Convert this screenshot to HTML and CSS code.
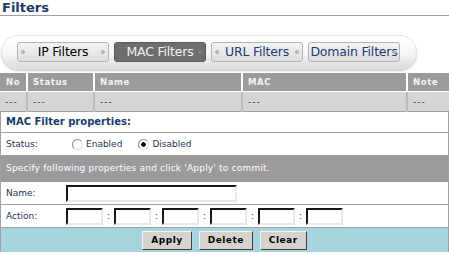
FILE: index.html
```html
<!DOCTYPE html>
<html lang="en">
<head>
  <meta charset="UTF-8">
  <title>Filters</title>
  <link rel="stylesheet" href="styles.css">
</head>
<body>
  <h1 class="page-title">Filters</h1>

  <div class="tabs">
    <a class="tab" href="#ip">IP Filters</a>
    <a class="tab active" href="#mac">MAC Filters</a>
    <a class="tab link" href="#url">URL Filters</a>
    <a class="tab link" href="#domain">Domain Filters</a>
  </div>

  <table class="filter-list">
    <tr>
      <th class="col-no">No</th>
      <th class="col-status">Status</th>
      <th class="col-name">Name</th>
      <th class="col-mac">MAC</th>
      <th class="col-note">Note</th>
    </tr>
    <tr>
      <td>---</td>
      <td>---</td>
      <td>---</td>
      <td>---</td>
      <td>---</td>
    </tr>
  </table>

  <form class="props">
    <div class="props-title">MAC Filter properties:</div>

    <div class="row status-row">
      <span class="label">Status:</span>
      <label class="radio"><input type="radio" name="status"> Enabled</label>
      <label class="radio"><input type="radio" name="status" checked> Disabled</label>
    </div>

    <div class="banner">Specify following properties and click 'Apply' to commit.</div>

    <div class="row">
      <span class="label">Name:</span>
      <input class="text name-input" type="text">
    </div>

    <div class="row">
      <span class="label">Action:</span>
      <div class="mac-fields">
        <input class="text mac-input" type="text"><span class="sep">:</span>
        <input class="text mac-input" type="text"><span class="sep">:</span>
        <input class="text mac-input" type="text"><span class="sep">:</span>
        <input class="text mac-input" type="text"><span class="sep">:</span>
        <input class="text mac-input" type="text"><span class="sep">:</span>
        <input class="text mac-input" type="text">
      </div>
    </div>

    <div class="actions">
      <button type="button" class="btn">Apply</button>
      <button type="button" class="btn">Delete</button>
      <button type="button" class="btn">Clear</button>
    </div>
  </form>
</body>
</html>
```

FILE: styles.css
```css
/* Router admin - filters page */
body {
  margin: 0;
  padding: 0;
  background-color: #fff;
  font-family: 'DejaVu Sans', Verdana, sans-serif;
  font-size: 9px;
  color: #223355;
}

.page-title {
  margin: 0;
  padding-left: 2px;
  font-size: 13px;
  line-height: 15px;
  color: #1a3c6e;
  border-bottom: 1px solid #a0a0a0;
}

/* tab pill */
.tabs {
  display: flex;
  align-items: center;
  gap: 5px;
  box-sizing: border-box;
  width: 416px;
  height: 34px;
  margin: 19px 0 0 1px;
  padding-left: 15px;
  border: 1px solid #e2e2e2;
  border-radius: 17px;
  background: linear-gradient(#ffffff, #f6f6f6 55%, #dcdcdc);
  box-shadow: 0 2px 2px #cfcfcf;
}

.tab {
  position: relative;
  display: block;
  box-sizing: border-box;
  width: 92px;
  height: 20px;
  line-height: 18px;
  text-align: center;
  font-size: 12.5px;
  letter-spacing: -0.2px;
  color: #000;
  text-decoration: none;
  border: 1px solid #b4b4b4;
  border-radius: 3px;
  background: linear-gradient(#f4f4f4, #dedede);
}

.tab::before,
.tab::after {
  content: '';
  position: absolute;
  top: 7px;
  width: 4px;
  height: 4px;
  border-radius: 50%;
  background: #c8c8c8;
  border: 1px solid #a8a8a8;
  box-sizing: border-box;
}

.tab::before { left: 3px; }
.tab::after { right: 3px; }

.tab.link { color: #1a3c7a; }
.tab.link:last-child::before { display: none; }

.tab.active {
  color: #f2f2f2;
  background: #6e6e6e;
  border-color: #5a5a5a;
}

.tab.active::before { display: none; }
.tab.active::after { background: #8a8a8a; border-color: #7a7a7a; }

/* list table */
.filter-list {
  width: 100%;
  margin-top: 4px;
  border-collapse: collapse;
  border-bottom: 1px solid #a0a0a0;
}

.filter-list th {
  height: 18px;
  padding: 0 0 0 5px;
  text-align: left;
  font-size: 8.5px;
  letter-spacing: 0.6px;
  color: #f4f4f4;
  background-color: #9c9a9c;
  border-right: 2px solid #fff;
  border-bottom: 1px solid #fff;
}

.filter-list td {
  height: 19px;
  padding: 0 0 0 5px;
  color: #1a3c6e;
  letter-spacing: 1px;
  background-color: #d6d6d6;
  background-image: radial-gradient(#cacaca 0.5px, transparent 0.6px);
  background-size: 2px 2px;
  border-right: 2px solid #bcbcbc;
}

.filter-list th:last-child,
.filter-list td:last-child { border-right: none; }

.col-no { width: 20px; }
.col-status { width: 60px; }
.col-name { width: 141px; }
.col-mac { width: 158px; }

.filter-list th.col-no { padding-left: 6px; }

/* properties form */
.props {
  margin: 0;
  border-left: 1px solid #a0a0a0;
  border-right: 1px solid #a0a0a0;
}

.props-title {
  height: 20px;
  padding-left: 5px;
  line-height: 20px;
  font-size: 10px;
  font-weight: bold;
  color: #1a3c6e;
  border-bottom: 1px solid #a0a0a0;
}

.row {
  display: flex;
  align-items: center;
  height: 22px;
  padding-left: 5px;
  border-bottom: 1px solid #a0a0a0;
}

.status-row { border-bottom: none; }

.label {
  width: 60px;
  color: #223355;
}

.radio {
  display: flex;
  align-items: center;
  margin-left: 6px;
  margin-right: 10px;
  color: #223355;
}

.radio input {
  appearance: none;
  width: 11px;
  height: 11px;
  margin: 0 3px 0 0;
  border-radius: 50%;
  border: 1px solid #8c8c8c;
  border-bottom-color: #e0e0e0;
  border-right-color: #e0e0e0;
  background: #fff;
}

.radio input:checked {
  background: radial-gradient(#000 2px, #fff 2.5px);
}

.banner {
  height: 27px;
  padding-left: 5px;
  line-height: 27px;
  color: #fff;
  letter-spacing: 0.2px;
  background-color: #9c9a9c;
}

.text {
  box-sizing: border-box;
  height: 17px;
  margin: 0;
  padding: 0;
  border: 2px inset #d0d0d0;
  border-top-color: #6c6c6c;
  border-left-color: #6c6c6c;
  border-bottom-color: #e8e8e8;
  border-right-color: #e8e8e8;
  background: #fff;
}

.name-input { width: 171px; }

.mac-fields {
  display: flex;
  align-items: center;
}

.mac-input { width: 37px; }

.sep {
  width: 11px;
  text-align: center;
  color: #1a3c7a;
}

.actions {
  display: flex;
  justify-content: center;
  align-items: center;
  gap: 7px;
  height: 24px;
  background-color: #a6d4df;
}

.btn {
  height: 19px;
  padding: 0 8px;
  font-family: 'DejaVu Sans', Verdana, sans-serif;
  font-size: 9px;
  font-weight: bold;
  letter-spacing: 0.5px;
  color: #000;
  background-color: #d6d3ce;
  border: 1px solid;
  border-color: #f4f4f4 #404040 #404040 #f4f4f4;
}
```
